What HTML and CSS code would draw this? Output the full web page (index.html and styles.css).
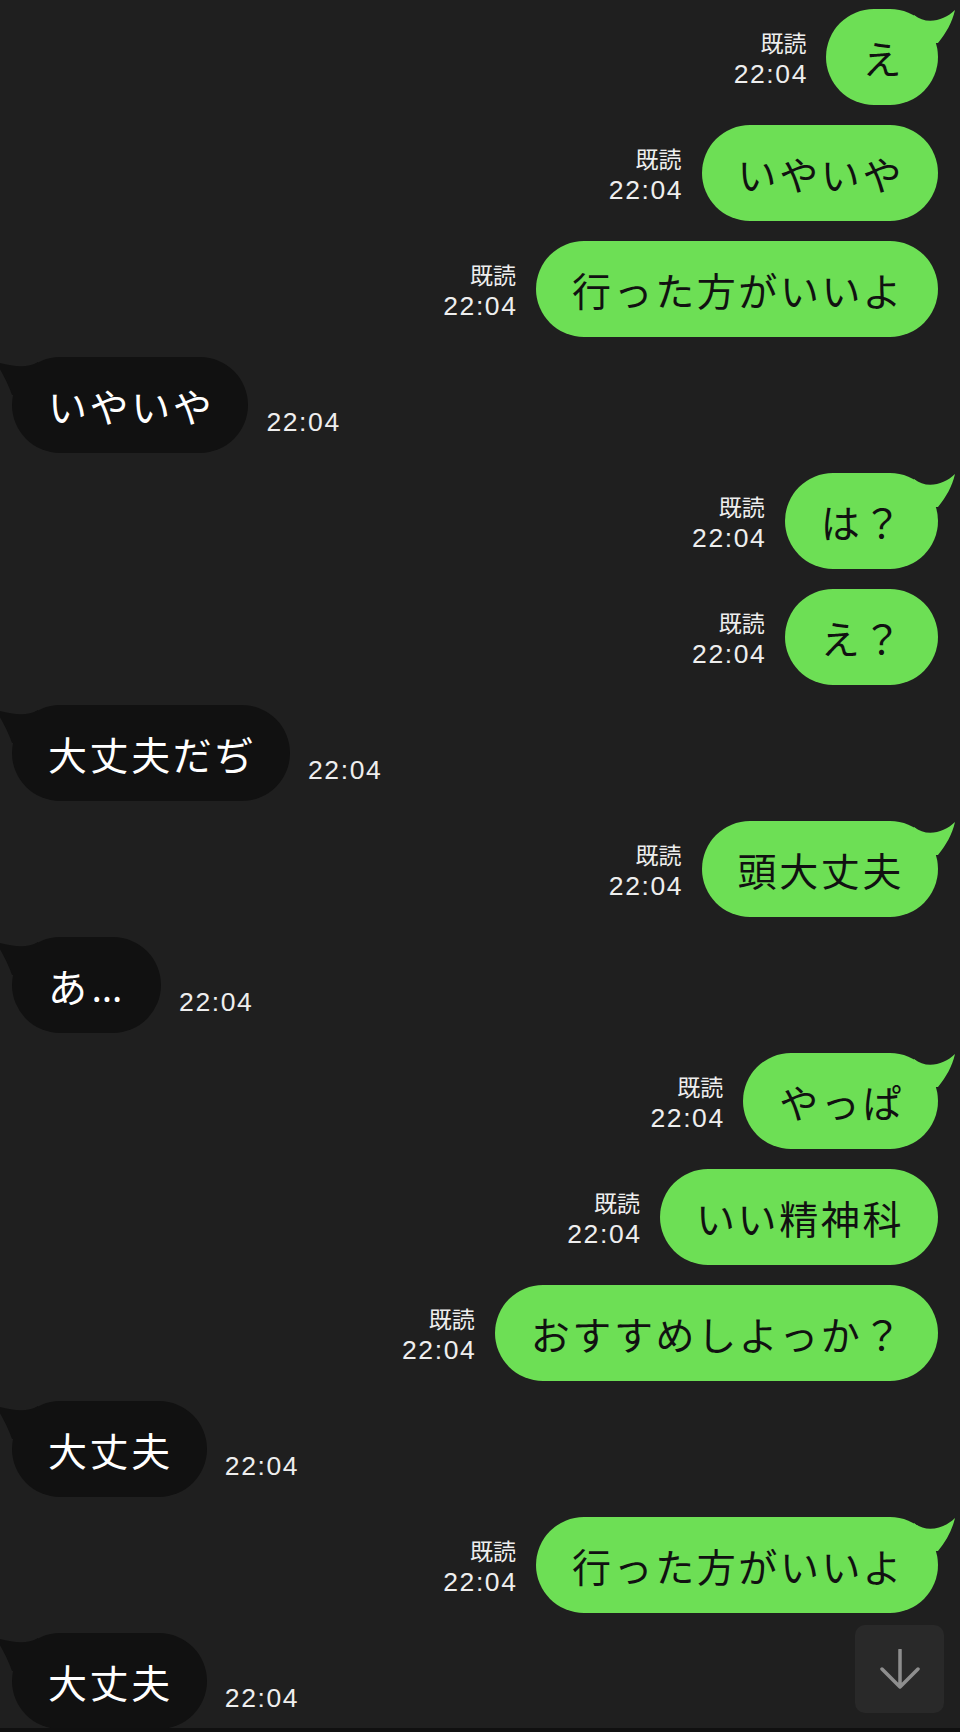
FILE: index.html
```html
<!DOCTYPE html>
<html lang="ja">
<head>
<meta charset="utf-8">
<title>トーク</title>
<link rel="stylesheet" href="styles.css">
</head>
<body>
<div class="screen">
  <main class="chat">
    <div class="row sent">
      <div class="meta"><span class="read">既読</span><span class="time">22:04</span></div>
      <div class="bubble out">え<svg class="tail tail-out" viewBox="0 0 42 40"><path d="M0 6 C12 16 30 12 41 1 C38 14 32 24 24 34 L0 34 Z"/></svg></div>
    </div>
    <div class="row sent">
      <div class="meta"><span class="read">既読</span><span class="time">22:04</span></div>
      <div class="bubble out">いやいや</div>
    </div>
    <div class="row sent">
      <div class="meta"><span class="read">既読</span><span class="time">22:04</span></div>
      <div class="bubble out">行った方がいいよ</div>
    </div>
    <div class="row recv">
      <div class="bubble in">いやいや<svg class="tail tail-in" viewBox="0 0 42 40"><path d="M42 5 C30 12 16 9 0 5 C6 16 12 26 16 38 L42 38 Z"/></svg></div>
      <div class="meta"><span class="time">22:04</span></div>
    </div>
    <div class="row sent">
      <div class="meta"><span class="read">既読</span><span class="time">22:04</span></div>
      <div class="bubble out">は？<svg class="tail tail-out" viewBox="0 0 42 40"><path d="M0 6 C12 16 30 12 41 1 C38 14 32 24 24 34 L0 34 Z"/></svg></div>
    </div>
    <div class="row sent">
      <div class="meta"><span class="read">既読</span><span class="time">22:04</span></div>
      <div class="bubble out">え？</div>
    </div>
    <div class="row recv">
      <div class="bubble in">大丈夫だぢ<svg class="tail tail-in" viewBox="0 0 42 40"><path d="M42 5 C30 12 16 9 0 5 C6 16 12 26 16 38 L42 38 Z"/></svg></div>
      <div class="meta"><span class="time">22:04</span></div>
    </div>
    <div class="row sent">
      <div class="meta"><span class="read">既読</span><span class="time">22:04</span></div>
      <div class="bubble out">頭大丈夫<svg class="tail tail-out" viewBox="0 0 42 40"><path d="M0 6 C12 16 30 12 41 1 C38 14 32 24 24 34 L0 34 Z"/></svg></div>
    </div>
    <div class="row recv">
      <div class="bubble in">あ<span class="ellipsis">…</span><svg class="tail tail-in" viewBox="0 0 42 40"><path d="M42 5 C30 12 16 9 0 5 C6 16 12 26 16 38 L42 38 Z"/></svg></div>
      <div class="meta"><span class="time">22:04</span></div>
    </div>
    <div class="row sent">
      <div class="meta"><span class="read">既読</span><span class="time">22:04</span></div>
      <div class="bubble out">やっぱ<svg class="tail tail-out" viewBox="0 0 42 40"><path d="M0 6 C12 16 30 12 41 1 C38 14 32 24 24 34 L0 34 Z"/></svg></div>
    </div>
    <div class="row sent">
      <div class="meta"><span class="read">既読</span><span class="time">22:04</span></div>
      <div class="bubble out">いい精神科</div>
    </div>
    <div class="row sent">
      <div class="meta"><span class="read">既読</span><span class="time">22:04</span></div>
      <div class="bubble out">おすすめしよっか？</div>
    </div>
    <div class="row recv">
      <div class="bubble in">大丈夫<svg class="tail tail-in" viewBox="0 0 42 40"><path d="M42 5 C30 12 16 9 0 5 C6 16 12 26 16 38 L42 38 Z"/></svg></div>
      <div class="meta"><span class="time">22:04</span></div>
    </div>
    <div class="row sent">
      <div class="meta"><span class="read">既読</span><span class="time">22:04</span></div>
      <div class="bubble out">行った方がいいよ<svg class="tail tail-out" viewBox="0 0 42 40"><path d="M0 6 C12 16 30 12 41 1 C38 14 32 24 24 34 L0 34 Z"/></svg></div>
    </div>
    <div class="row recv">
      <div class="bubble in">大丈夫<svg class="tail tail-in" viewBox="0 0 42 40"><path d="M42 5 C30 12 16 9 0 5 C6 16 12 26 16 38 L42 38 Z"/></svg></div>
      <div class="meta"><span class="time">22:04</span></div>
    </div>
  </main>
  <button class="scroll-down" type="button" aria-label="最新のメッセージへ">
    <svg viewBox="0 0 40 40" width="40" height="40"><path d="M20 1 V38 M2 20 L20 38 L38 20" fill="none" stroke="#8e8e8e" stroke-width="3.5" stroke-linecap="round" stroke-linejoin="round"/></svg>
  </button>
  <div class="bottom-strip"></div>
</div>
</body>
</html>
```

FILE: styles.css
```css
* {
  box-sizing: border-box;
}

html, body {
  margin: 0;
  padding: 0;
  background: #1f1f1f;
}

body {
  font-family: "Noto Sans CJK JP", "Noto Sans", sans-serif;
  color: #ffffff;
}

.screen {
  position: relative;
  width: 960px;
  height: 1732px;
  overflow: hidden;
  display: flex;
  flex-direction: column;
}

.chat {
  height: 1728px;
  overflow: hidden;
  padding-top: 9px;
  display: flex;
  flex-direction: column;
  gap: 20px;
}

.row {
  display: flex;
  align-items: flex-end;
  gap: 20px;
}

.row.sent {
  justify-content: flex-end;
  padding-right: 22px;
}

.row.recv {
  justify-content: flex-start;
  padding-left: 12px;
  gap: 18px;
}

.bubble {
  position: relative;
  height: 96px;
  padding: 20px 34px 20px 36px;
  border-radius: 48px;
  font-size: 39px;
  line-height: 56px;
  letter-spacing: 2.6px;
  white-space: nowrap;
}

.bubble .ellipsis {
  font-family: "Noto Sans", sans-serif;
  padding: 0 2px;
}

.bubble.out {
  background: #6ddf55;
  color: #111111;
}

.bubble.in {
  background: #111111;
  color: #ffffff;
}

.tail {
  position: absolute;
  top: 0;
  width: 42px;
  height: 40px;
  overflow: visible;
}

.tail-out {
  right: -18px;
  fill: #6ddf55;
}

.tail-in {
  left: -16px;
  fill: #111111;
}

.meta {
  display: flex;
  flex-direction: column;
  align-items: flex-end;
  margin-bottom: 16px;
  color: #eeeeee;
}

.row.recv .meta {
  align-items: flex-start;
  margin-bottom: 16px;
}

.read {
  font-family: "Noto Sans CJK JP", sans-serif;
  font-size: 23px;
  line-height: 34px;
}

.time {
  font-family: "Liberation Sans", "Noto Sans", sans-serif;
  font-size: 26.5px;
  line-height: 30px;
  letter-spacing: 1.6px;
  margin-right: -1.6px;
}

.scroll-down {
  position: absolute;
  right: 16px;
  bottom: 19px;
  width: 89px;
  height: 88px;
  border: none;
  border-radius: 10px;
  background: #292929;
  display: flex;
  align-items: center;
  justify-content: center;
  padding: 0;
}

.bottom-strip {
  height: 4px;
  background: #101010;
}
```
